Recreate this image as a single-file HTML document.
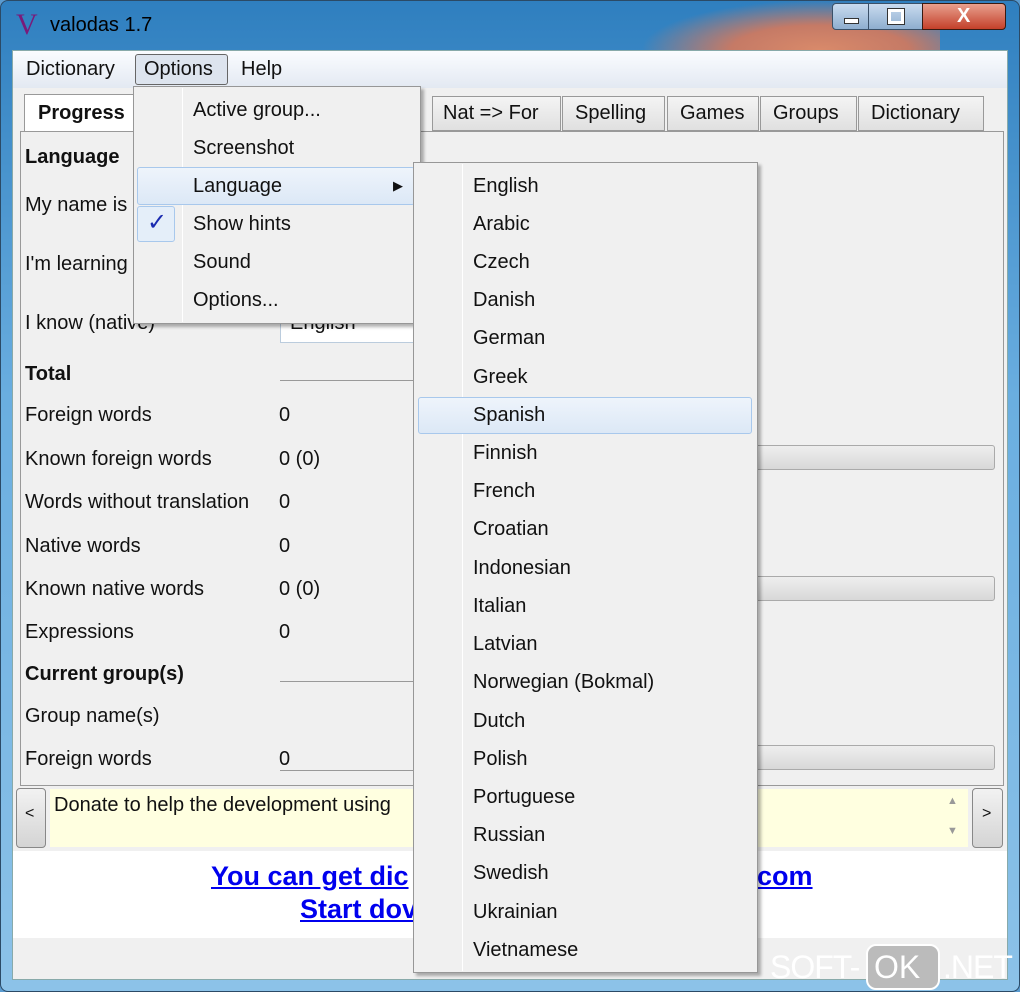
<!DOCTYPE html>
<html><head><style>
*{margin:0;padding:0;box-sizing:border-box}
body{width:1020px;height:992px;overflow:hidden;font-family:"Liberation Sans",sans-serif;font-size:20px;color:#111;background:#5a9bd0;position:relative}
.abs{position:absolute}
.frame{left:0;top:0;width:1020px;height:992px;background:linear-gradient(180deg,#2f7fbf 0%,#6aaee0 40%,#8cc2e8 100%);border:1px solid #2b4a66;border-radius:8px}
.t{position:absolute;white-space:nowrap}
.b{font-weight:bold}
.menuitem{position:absolute;white-space:nowrap}
</style></head><body>
<div class="abs frame"></div>
<div class="abs" style="left:640px;top:0;width:300px;height:50px;background:radial-gradient(ellipse at 60% 100%,#d98a6a 0%,#c57a66 35%,rgba(120,150,200,0) 70%)"></div>
<div class="t" style="left:16px;top:8px;font-family:'Liberation Serif',serif;font-size:30px;color:#7a1a7a">V</div>
<div class="t" style="left:50px;top:14px;font-size:20px;color:#000">valodas 1.7</div>
<div class="abs" style="left:832px;top:3px;width:37px;height:27px;border:1px solid #3a5068;border-radius:4px 0 0 4px;background:linear-gradient(#c9dbef,#8eaecf)"><div class="abs" style="left:11px;top:14px;width:15px;height:6px;background:#fff;border:1px solid #333"></div></div>
<div class="abs" style="left:868px;top:3px;width:55px;height:27px;border:1px solid #3a5068;background:linear-gradient(#c9dbef,#8eaecf)"><div class="abs" style="left:19px;top:5px;width:16px;height:15px;border:3px solid #fff;outline:1px solid #333"></div></div>
<div class="abs" style="left:922px;top:3px;width:84px;height:27px;border:1px solid #3a1a10;border-radius:0 4px 4px 0;background:linear-gradient(#e8a08e,#c4402a)"><div class="t" style="left:34px;top:1px;color:#fff;font-weight:bold;font-size:20px">X</div></div>
<div class="abs" style="left:12px;top:50px;width:996px;height:930px;background:#f0f0f0;border:1px solid #8aa"></div>
<div class="abs" style="left:13px;top:51px;width:994px;height:37px;background:linear-gradient(#fafcff,#e3e9f2)"></div>
<div class="t" style="left:26px;top:58px">Dictionary</div>
<div class="abs" style="left:135px;top:54px;width:93px;height:31px;border:1px solid #666;border-radius:3px;background:#dde4ee"></div>
<div class="t" style="left:144px;top:58px">Options</div>
<div class="t" style="left:241px;top:58px">Help</div>
<div class="abs" style="left:24px;top:94px;width:112px;height:38px;background:#fff;border:1px solid #999;border-bottom:none"></div>
<div class="t b" style="left:38px;top:102px">Progress</div>
<div class="abs" style="left:20px;top:131px;width:984px;height:655px;border:1px solid #999;background:#f0f0f0"></div>
<div class="abs" style="left:432px;top:96px;width:129px;height:35px;border:1px solid #999;background:linear-gradient(#f4f4f4,#e0e0e0)"></div><div class="t" style="left:443px;top:102px">Nat =&gt; For</div>
<div class="abs" style="left:562px;top:96px;width:103px;height:35px;border:1px solid #999;background:linear-gradient(#f4f4f4,#e0e0e0)"></div><div class="t" style="left:575px;top:102px">Spelling</div>
<div class="abs" style="left:667px;top:96px;width:92px;height:35px;border:1px solid #999;background:linear-gradient(#f4f4f4,#e0e0e0)"></div><div class="t" style="left:680px;top:102px">Games</div>
<div class="abs" style="left:760px;top:96px;width:97px;height:35px;border:1px solid #999;background:linear-gradient(#f4f4f4,#e0e0e0)"></div><div class="t" style="left:773px;top:102px">Groups</div>
<div class="abs" style="left:858px;top:96px;width:126px;height:35px;border:1px solid #999;background:linear-gradient(#f4f4f4,#e0e0e0)"></div><div class="t" style="left:871px;top:102px">Dictionary</div>
<div class="t b" style="left:25px;top:146px">Language</div>
<div class="t" style="left:25px;top:194px">My name is</div>
<div class="t" style="left:25px;top:253px">I'm learning</div>
<div class="t" style="left:25px;top:312px">I know (native)</div>
<div class="abs" style="left:280px;top:306px;width:140px;height:37px;background:#fff;border:1px solid #bcd"></div>
<div class="t" style="left:290px;top:312px">English</div>
<div class="t b" style="left:25px;top:363px">Total</div>
<div class="abs" style="left:280px;top:380px;width:140px;height:1px;background:#999"></div>
<div class="t" style="left:25px;top:404px">Foreign words</div><div class="t" style="left:279px;top:404px">0</div>
<div class="t" style="left:25px;top:448px">Known foreign words</div><div class="t" style="left:279px;top:448px">0 (0)</div>
<div class="t" style="left:25px;top:491px">Words without translation</div><div class="t" style="left:279px;top:491px">0</div>
<div class="t" style="left:25px;top:535px">Native words</div><div class="t" style="left:279px;top:535px">0</div>
<div class="t" style="left:25px;top:578px">Known native words</div><div class="t" style="left:279px;top:578px">0 (0)</div>
<div class="t" style="left:25px;top:621px">Expressions</div><div class="t" style="left:279px;top:621px">0</div>
<div class="t b" style="left:25px;top:663px">Current group(s)</div>
<div class="abs" style="left:280px;top:681px;width:140px;height:1px;background:#999"></div>
<div class="t" style="left:25px;top:705px">Group name(s)</div>
<div class="abs" style="left:740px;top:745px;width:255px;height:25px;border:1px solid #aaa;border-radius:3px;background:linear-gradient(#eee,#d8d8d8)"></div>
<div class="t" style="left:25px;top:748px">Foreign words</div><div class="t" style="left:279px;top:748px">0</div>
<div class="abs" style="left:280px;top:770px;width:140px;height:1px;background:#999"></div>
<div class="abs" style="left:740px;top:445px;width:255px;height:25px;border:1px solid #aaa;border-radius:3px;background:linear-gradient(#eee,#d8d8d8)"></div>
<div class="abs" style="left:740px;top:576px;width:255px;height:25px;border:1px solid #aaa;border-radius:3px;background:linear-gradient(#eee,#d8d8d8)"></div>
<div class="abs" style="left:16px;top:788px;width:30px;height:60px;border:1px solid #888;border-radius:4px;background:linear-gradient(#f2f2f2,#d4d4d4)"></div><div class="t" style="left:25px;top:805px;font-size:16px">&lt;</div>
<div class="abs" style="left:50px;top:789px;width:918px;height:58px;background:#ffffe0"></div>
<div class="t" style="left:54px;top:794px">Donate to help the development using</div>
<div class="t" style="left:947px;top:795px;font-size:11px;color:#999">▲</div><div class="t" style="left:947px;top:825px;font-size:11px;color:#999">▼</div>
<div class="abs" style="left:972px;top:788px;width:31px;height:60px;border:1px solid #888;border-radius:4px;background:linear-gradient(#f2f2f2,#d4d4d4)"></div><div class="t" style="left:982px;top:805px;font-size:16px">&gt;</div>
<div class="abs" style="left:13px;top:851px;width:994px;height:87px;background:#fff"></div>
<div class="t b" style="left:211px;top:861px;font-size:27px;color:#0000ee;text-decoration:underline">You can get dic</div>
<div class="t b" style="left:757px;top:861px;font-size:27px;color:#0000ee;text-decoration:underline">com</div>
<div class="t b" style="left:300px;top:894px;font-size:27px;color:#0000ee;text-decoration:underline">Start dov</div>
<div class="abs" style="left:133px;top:86px;width:288px;height:238px;background:#f0f0f0;border:1px solid #979797;box-shadow:3px 3px 3px rgba(0,0,0,.3)"></div>
<div class="abs" style="left:182px;top:88px;width:1px;height:234px;background:#e2e3e3;border-right:1px solid #fff"></div>
<div class="abs" style="left:137px;top:167px;width:278px;height:38px;border:1px solid #a8c8ec;border-radius:3px;background:linear-gradient(#eef4fb,#dce8f6)"></div>
<div class="abs" style="left:137px;top:206px;width:38px;height:36px;border:1px solid #a8c8ec;border-radius:3px;background:#e4eef9"></div>
<div class="t" style="left:147px;top:208px;color:#1a2bb0;font-size:24px">✓</div>
<div class="menuitem" style="left:193px;top:99px">Active group...</div>
<div class="menuitem" style="left:193px;top:137px">Screenshot</div>
<div class="menuitem" style="left:193px;top:175px">Language</div>
<div class="t" style="left:393px;top:178px;font-size:13px">▶</div>
<div class="menuitem" style="left:193px;top:213px">Show hints</div>
<div class="menuitem" style="left:193px;top:251px">Sound</div>
<div class="menuitem" style="left:193px;top:289px">Options...</div>
<div class="abs" style="left:413px;top:162px;width:345px;height:811px;background:#f0f0f0;border:1px solid #979797;box-shadow:3px 3px 3px rgba(0,0,0,.3)"></div>
<div class="abs" style="left:462px;top:164px;width:1px;height:807px;background:#e2e3e3;border-right:1px solid #fff"></div>
<div class="abs" style="left:418px;top:397px;width:334px;height:37px;border:1px solid #a8c8ec;border-radius:3px;background:linear-gradient(#eef4fb,#dce8f6)"></div>
<div class="menuitem" style="left:473px;top:175px">English</div>
<div class="menuitem" style="left:473px;top:213px">Arabic</div>
<div class="menuitem" style="left:473px;top:251px">Czech</div>
<div class="menuitem" style="left:473px;top:289px">Danish</div>
<div class="menuitem" style="left:473px;top:327px">German</div>
<div class="menuitem" style="left:473px;top:366px">Greek</div>
<div class="menuitem" style="left:473px;top:404px">Spanish</div>
<div class="menuitem" style="left:473px;top:442px">Finnish</div>
<div class="menuitem" style="left:473px;top:480px">French</div>
<div class="menuitem" style="left:473px;top:518px">Croatian</div>
<div class="menuitem" style="left:473px;top:557px">Indonesian</div>
<div class="menuitem" style="left:473px;top:595px">Italian</div>
<div class="menuitem" style="left:473px;top:633px">Latvian</div>
<div class="menuitem" style="left:473px;top:671px">Norwegian (Bokmal)</div>
<div class="menuitem" style="left:473px;top:710px">Dutch</div>
<div class="menuitem" style="left:473px;top:748px">Polish</div>
<div class="menuitem" style="left:473px;top:786px">Portuguese</div>
<div class="menuitem" style="left:473px;top:824px">Russian</div>
<div class="menuitem" style="left:473px;top:862px">Swedish</div>
<div class="menuitem" style="left:473px;top:901px">Ukrainian</div>
<div class="menuitem" style="left:473px;top:939px">Vietnamese</div>
<div class="abs" style="left:866px;top:944px;width:74px;height:46px;border:2px solid #fff;border-radius:10px;background:#bbb"></div>
<div class="t" style="left:770px;top:949px;font-size:32px;color:#fff;letter-spacing:-1px">SOFT-</div>
<div class="t" style="left:874px;top:949px;font-size:32px;color:#fff">OK</div>
<div class="t" style="left:943px;top:949px;font-size:32px;color:#fff;letter-spacing:-1px">.NET</div>
</body></html>
